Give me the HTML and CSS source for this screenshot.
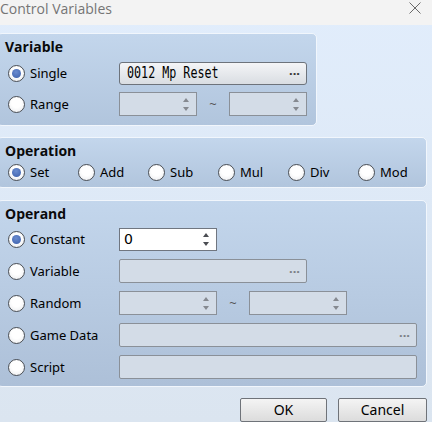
FILE: index.html
```html
<!DOCTYPE html>
<html lang="en">
<head>
<meta charset="utf-8">
<title>Control Variables</title>
<link rel="stylesheet" href="styles.css">
</head>
<body>
<div class="titlebar">
  <span class="title">Control Variables</span>
  <svg class="close" width="12" height="12" viewBox="0 0 12 12"><path d="M0.5 0.5 L11.5 11.5 M11.5 0.5 L0.5 11.5" stroke="#6a6a6a" stroke-width="1"/></svg>
</div>

<div class="dialog">
  <section class="panel panel-variable">
    <h2 class="heading">Variable</h2>
    <div class="rows">
      <div class="row">
        <label class="radio checked"><span class="dot"></span>Single</label>
        <div class="picker enabled w188"><span class="mono">0012 Mp Reset</span><span class="more">···</span></div>
      </div>
      <div class="row">
        <label class="radio"><span class="dot"></span>Range</label>
        <div class="spin disabled w78"><span class="arrows"><i class="up"></i><i class="down"></i></span></div>
        <span class="tilde t32">~</span>
        <div class="spin disabled w78"><span class="arrows"><i class="up"></i><i class="down"></i></span></div>
      </div>
    </div>
  </section>

  <section class="panel panel-operation">
    <h2 class="heading">Operation</h2>
    <div class="ops">
      <label class="radio checked"><span class="dot"></span>Set</label>
      <label class="radio"><span class="dot"></span>Add</label>
      <label class="radio"><span class="dot"></span>Sub</label>
      <label class="radio"><span class="dot"></span>Mul</label>
      <label class="radio"><span class="dot"></span>Div</label>
      <label class="radio"><span class="dot"></span>Mod</label>
    </div>
  </section>

  <section class="panel panel-operand">
    <h2 class="heading">Operand</h2>
    <div class="rows">
      <div class="row">
        <label class="radio checked"><span class="dot"></span>Constant</label>
        <div class="spin active w98"><span class="value">0</span><span class="arrows"><i class="up"></i><i class="down"></i></span></div>
      </div>
      <div class="row">
        <label class="radio"><span class="dot"></span>Variable</label>
        <div class="picker disabled w188"><span></span><span class="more">···</span></div>
      </div>
      <div class="row">
        <label class="radio"><span class="dot"></span>Random</label>
        <div class="spin disabled w98"><span class="arrows"><i class="up"></i><i class="down"></i></span></div>
        <span class="tilde t32">~</span>
        <div class="spin disabled w98"><span class="arrows"><i class="up"></i><i class="down"></i></span></div>
      </div>
      <div class="row">
        <label class="radio"><span class="dot"></span>Game Data</label>
        <div class="picker disabled w298"><span></span><span class="more">···</span></div>
      </div>
      <div class="row">
        <label class="radio"><span class="dot"></span>Script</label>
        <div class="textbox disabled w298"></div>
      </div>
    </div>
  </section>

  <div class="buttons">
    <button class="btn ok">OK</button>
    <button class="btn cancel">Cancel</button>
  </div>
</div>
</body>
</html>
```

FILE: styles.css
```css
* { box-sizing: border-box; }

html, body {
  margin: 0;
  padding: 0;
  width: 432px;
  height: 422px;
  overflow: hidden;
}

body {
  font-family: "Noto Sans", "Open Sans", sans-serif;
  font-size: 13px;
  color: #000;
  background: linear-gradient(#e1edfc, #dbe5f0);
}

/* window caption */
.titlebar {
  height: 25px;
  background: #f3f3f3;
  display: flex;
  align-items: flex-start;
  justify-content: space-between;
  padding: 0 11px 0 0;
}
.title {
  font-family: "Open Sans", sans-serif;
  font-size: 14px;
  line-height: 17px;
  color: #757575;
}
.close { margin-top: 2px; }

.dialog {
  display: flex;
  flex-direction: column;
  padding: 8px 5px 0 0;
  margin-left: -3px;
}

/* group boxes */
.panel {
  border: 1px solid #f1f6fc;
  border-radius: 5px;
  background: linear-gradient(#c3d6ec, #b1c5dd);
  padding: 4px 0 0 10px;
}
.panel-variable { width: 320px; height: 93px; }
.panel-operation { margin-top: 11px; height: 51px; }
.panel-operand { margin-top: 12px; height: 187px; background: linear-gradient(#c3d6ec, #adc0d8); }

.heading {
  margin: 0 0 0 -3px;
  font-family: "Open Sans", sans-serif;
  font-size: 14px;
  line-height: 18px;
  font-weight: 700;
  color: #0a0a0a;
}

.rows {
  display: flex;
  flex-direction: column;
  gap: 8px;
}
.panel-variable .rows { margin-top: 5px; gap: 7px; }
.panel-operand .rows { margin-top: 4px; }

.row {
  display: flex;
  align-items: center;
  height: 24px;
}
.row .radio { width: 111px; }

/* radio buttons */
.radio {
  display: flex;
  align-items: center;
  gap: 5px;
  line-height: 18px;
  white-space: nowrap;
}
.dot {
  width: 17px;
  height: 17px;
  border-radius: 50%;
  border: 1px solid #4b4f55;
  background: radial-gradient(circle at 50% 40%, #ffffff 40%, #e6e8eb 100%);
  display: flex;
  align-items: center;
  justify-content: center;
  flex: none;
}
.radio.checked .dot::after {
  content: "";
  width: 9px;
  height: 9px;
  border-radius: 50%;
  background: radial-gradient(circle at 45% 35%, #6a8cd0, #3b5ea9);
}

.ops {
  display: grid;
  grid-template-columns: repeat(6, 70px);
  margin-top: 3px;
  height: 18px;
}

/* fields */
.picker, .spin, .textbox {
  height: 24px;
  border: 1px solid #868c94;
  display: flex;
  align-items: center;
  justify-content: space-between;
  flex: none;
}
.picker { border-radius: 3px; padding: 0 6px 0 7px; }
.picker.enabled {
  height: 23px;
  border-color: #6d737b;
  background: linear-gradient(#f4f5f7, #d9dde2);
}
.picker.disabled, .textbox.disabled {
  background: #d3dce7;
  border-color: #8a9098;
  border-radius: 2px;
}
.spin { padding: 0 7px 0 4px; border-color: #8a9098; }
.spin.disabled { background: #d3dce7; }
.spin.active { background: #ffffff; height: 23px; border-color: #707680; }

.w78 { width: 78px; }
.w98 { width: 98px; }
.w188 { width: 188px; }
.w298 { width: 298px; }

.mono {
  font-family: "DejaVu Sans Mono", "Liberation Mono", monospace;
  font-size: 15px;
  display: inline-block;
  transform: scaleX(0.78);
  transform-origin: left center;
  color: #000;
}
.value {
  font-family: "DejaVu Sans", sans-serif;
  font-size: 14px;
  color: #000;
}
.more {
  font-size: 13px;
  color: #333;
  font-weight: 700;
  line-height: 10px;
}
.disabled .more { color: #7b7f85; }

.arrows {
  margin-left: auto;
  display: flex;
  flex-direction: column;
  gap: 5px;
}
.arrows i {
  width: 0;
  height: 0;
  border-left: 3.5px solid transparent;
  border-right: 3.5px solid transparent;
}
.arrows .up { border-bottom: 4px solid #858990; }
.arrows .down { border-top: 4px solid #858990; }
.active .arrows .up { border-bottom-color: #4a4d52; }
.active .arrows .down { border-top-color: #4a4d52; }

.tilde {
  text-align: center;
  color: #555;
  font-size: 13px;
}
.t32 { width: 32px; }

/* dialog buttons */
.buttons {
  display: flex;
  justify-content: flex-end;
  gap: 11px;
  margin-top: 11px;
}
.btn {
  font-family: "Noto Sans", "Open Sans", sans-serif;
  font-size: 14px;
  color: #000;
  height: 24px;
  border: 1px solid #6f7379;
  border-radius: 2px;
  background: linear-gradient(#f4f4f4, #dcdcdc);
  padding: 0;
  line-height: 20px;
}
.ok { width: 87px; }
.cancel { width: 89px; }
```
